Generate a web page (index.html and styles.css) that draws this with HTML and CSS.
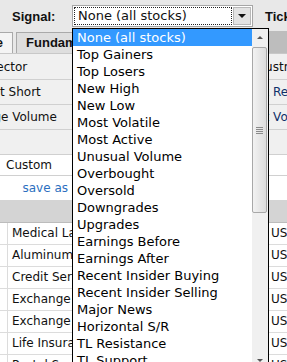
FILE: index.html
```html
<!DOCTYPE html>
<html>
<head>
  <title>Screener</title>
  <link rel="stylesheet" href="styles.css">
</head>
<body>
  <div class="page">
    <div class="topbar">
      <span class="bar-label signal">Signal:</span>
      <div class="select">
        <div class="select-value">None (all stocks)</div>
        <div class="select-arrow"><span class="tri-down"></span></div>
      </div>
      <span class="bar-label ticker">Ticker:</span>
    </div>

    <div class="tabs">
      <div class="tab active">Descriptive</div>
      <div class="tab">Fundamental</div>
      <div class="tab">Technical</div>
      <div class="tab-rest"></div>
    </div>

    <div class="filters">
      <div class="filter-row">
        <div class="flabel">Sector</div><div class="fvalue"></div><div class="flabel">Industry</div>
      </div>
      <div class="filter-row">
        <div class="flabel">Float Short</div><div class="fvalue"></div><div class="flabel link">Analyst Recom.</div>
      </div>
      <div class="filter-row">
        <div class="flabel">Average Volume</div><div class="fvalue"></div><div class="flabel link">Current Volume</div>
      </div>
      <div class="filter-row">
        <div class="flabel"></div><div class="fvalue"></div><div class="flabel"></div>
      </div>
    </div>

    <div class="preset-row">
      <div class="preset">Custom</div>
    </div>
    <div class="save-row">
      <a class="save-link" href="#">save as</a>
    </div>

    <div class="grid-head"></div>

    <div class="grid">
      <div class="grid-row"><div class="num"></div><div class="name">Medical Laboratories &amp; Research</div><div class="country">USA</div></div>
      <div class="grid-row"><div class="num"></div><div class="name">Aluminum</div><div class="country">USA</div></div>
      <div class="grid-row"><div class="num"></div><div class="name">Credit Services</div><div class="country">USA</div></div>
      <div class="grid-row"><div class="num"></div><div class="name">Exchange Traded Fund</div><div class="country">USA</div></div>
      <div class="grid-row"><div class="num"></div><div class="name">Exchange Traded Fund</div><div class="country">USA</div></div>
      <div class="grid-row"><div class="num"></div><div class="name">Life Insurance</div><div class="country">USA</div></div>
      <div class="grid-row"><div class="num"></div><div class="name">Postal Services</div><div class="country">USA</div></div>
    </div>

    <!-- open list of the Signal select -->
    <div class="dropdown">
      <ul class="options">
        <li class="selected">None (all stocks)</li>
        <li>Top Gainers</li>
        <li>Top Losers</li>
        <li>New High</li>
        <li>New Low</li>
        <li>Most Volatile</li>
        <li>Most Active</li>
        <li>Unusual Volume</li>
        <li>Overbought</li>
        <li>Oversold</li>
        <li>Downgrades</li>
        <li>Upgrades</li>
        <li>Earnings Before</li>
        <li>Earnings After</li>
        <li>Recent Insider Buying</li>
        <li>Recent Insider Selling</li>
        <li>Major News</li>
        <li>Horizontal S/R</li>
        <li>TL Resistance</li>
        <li>TL Support</li>
      </ul>
      <div class="scrollbar">
        <div class="sb-btn"><span class="tri-up"></span></div>
        <div class="sb-thumb"><span class="grip"></span></div>
        <div class="sb-track"></div>
        <div class="sb-btn"><span class="tri-down small"></span></div>
      </div>
    </div>
  </div>
</body>
</html>
```

FILE: styles.css
```css
body {
  margin: 0;
  background-color: #fff;
  font-family: "DejaVu Sans", Verdana, sans-serif;
  font-size: 12px;
  color: #111;
  overflow: hidden;
}
.page {
  position: relative;
  width: 287px;
  height: 362px;
  overflow: hidden;
}

/* top bar */
.topbar {
  height: 31px;
  background-color: #e8e8e8;
  display: flex;
  align-items: center;
  padding-top: 1px;
  box-sizing: border-box;
}
.topbar > * {
  flex-shrink: 0;
}
.bar-label {
  font-family: "Liberation Sans", Arial, sans-serif;
  font-weight: bold;
  font-size: 13px;
  color: #111;
}
.signal {
  width: 60px;
  padding-left: 12px;
}
.ticker {
  margin-left: 12px;
  white-space: nowrap;
}
.select {
  width: 181px;
  height: 22px;
  box-sizing: border-box;
  border: 1px solid #a6a6a6;
  background-color: #fff;
  display: flex;
  padding: 1px;
}
.select-value {
  flex: 1;
  border: 1px dotted #222;
  padding-left: 3px;
  line-height: 16px;
  font-size: 13px;
}
.select-arrow {
  width: 16px;
  margin-left: 1px;
  background-color: #e3e3e3;
  border: 1px solid #b8b8b8;
  display: flex;
  align-items: center;
  justify-content: center;
}
.tri-down {
  width: 0;
  height: 0;
  border-left: 4px solid transparent;
  border-right: 4px solid transparent;
  border-top: 4px solid #111;
}
.tri-down.small {
  border-left-width: 3px;
  border-right-width: 3px;
  border-top: 3px solid #555;
}
.tri-up {
  width: 0;
  height: 0;
  border-left: 3px solid transparent;
  border-right: 3px solid transparent;
  border-bottom: 3px solid #555;
}

/* tabs */
.tabs {
  height: 22px;
  background-color: #e8e8e8;
  display: flex;
  gap: 3px;
  margin-left: -77px;
  border-bottom: 1px solid #c8c8c8;
}
.tab {
  flex-shrink: 0;
  margin-top: 1px;
  padding: 0 9px;
  line-height: 19px;
  font-family: "Liberation Sans", Arial, sans-serif;
  font-size: 13px;
  font-weight: bold;
  border: 1px solid #a9a9a9;
  border-bottom: none;
  background-color: #dedede;
  white-space: nowrap;
}
.tab.active {
  background-color: #f4f4f4;
}
.tab-rest {
  flex: 1;
  margin-left: 60px;
  background-color: #bdbdbd;
}

/* filters */
.filters {
  background-color: #f0f0f0;
  margin-left: -56px;
  padding-top: 1px;
}
.filter-row {
  display: grid;
  grid-template-columns: 128px 135px 128px;
  height: 24px;
  border-bottom: 1px solid #d0d0d0;
}
.flabel {
  text-align: center;
  line-height: 24px;
  white-space: nowrap;
}
.flabel.link {
  color: #10306a;
}
.preset-row {
  height: 20px;
  background-color: #fff;
  border-bottom: 1px solid #d0d0d0;
}
.preset {
  width: 66px;
  line-height: 20px;
  padding-left: 6px;
}
.save-row {
  height: 24px;
  width: 68px;
  text-align: right;
  line-height: 24px;
}
.save-link {
  color: #2b6fc0;
  text-decoration: none;
}
.grid-head {
  height: 22px;
  background-color: #d4d4d4;
  border-bottom: 1px solid #bcbcbc;
}
.grid-row {
  display: grid;
  grid-template-columns: 8px 1fr 16px;
  height: 21px;
  border-bottom: 1px solid #dcdcdc;
}
.num {
  border-right: 1px solid #dcdcdc;
}
.name {
  padding-left: 4px;
  line-height: 21px;
  white-space: nowrap;
  overflow: hidden;
}
.country {
  line-height: 21px;
  white-space: nowrap;
}

/* open select list */
.dropdown {
  position: absolute;
  left: 72px;
  top: 28px;
  width: 197px;
  height: 342px;
  box-sizing: border-box;
  border: 1px solid #000;
  background-color: #fff;
  display: flex;
  font-size: 13px;
}
.options {
  list-style: none;
  margin: 0;
  padding: 0;
  flex: 1;
}
.options li {
  height: 17px;
  line-height: 17px;
  padding-left: 4px;
  color: #000;
  white-space: nowrap;
}
.options li.selected {
  background-color: #3399ff;
  color: #fff;
}
.scrollbar {
  width: 16px;
  flex-shrink: 0;
  background-color: #f0f0f0;
  display: flex;
  flex-direction: column;
}
.sb-btn {
  height: 17px;
  display: flex;
  align-items: center;
  justify-content: center;
}
.sb-thumb {
  height: 164px;
  margin: 1px 1px 0 0;
  border: 1px solid #a8a8a8;
  border-radius: 2px;
  background: linear-gradient(to right, #f2f2f2, #dcdcdc);
  display: flex;
  align-items: center;
  justify-content: center;
}
.grip {
  width: 7px;
  height: 7px;
  background: repeating-linear-gradient(to bottom, #8a8a8a 0 1px, transparent 1px 2px);
}
.sb-track {
  flex: 1;
}
```
